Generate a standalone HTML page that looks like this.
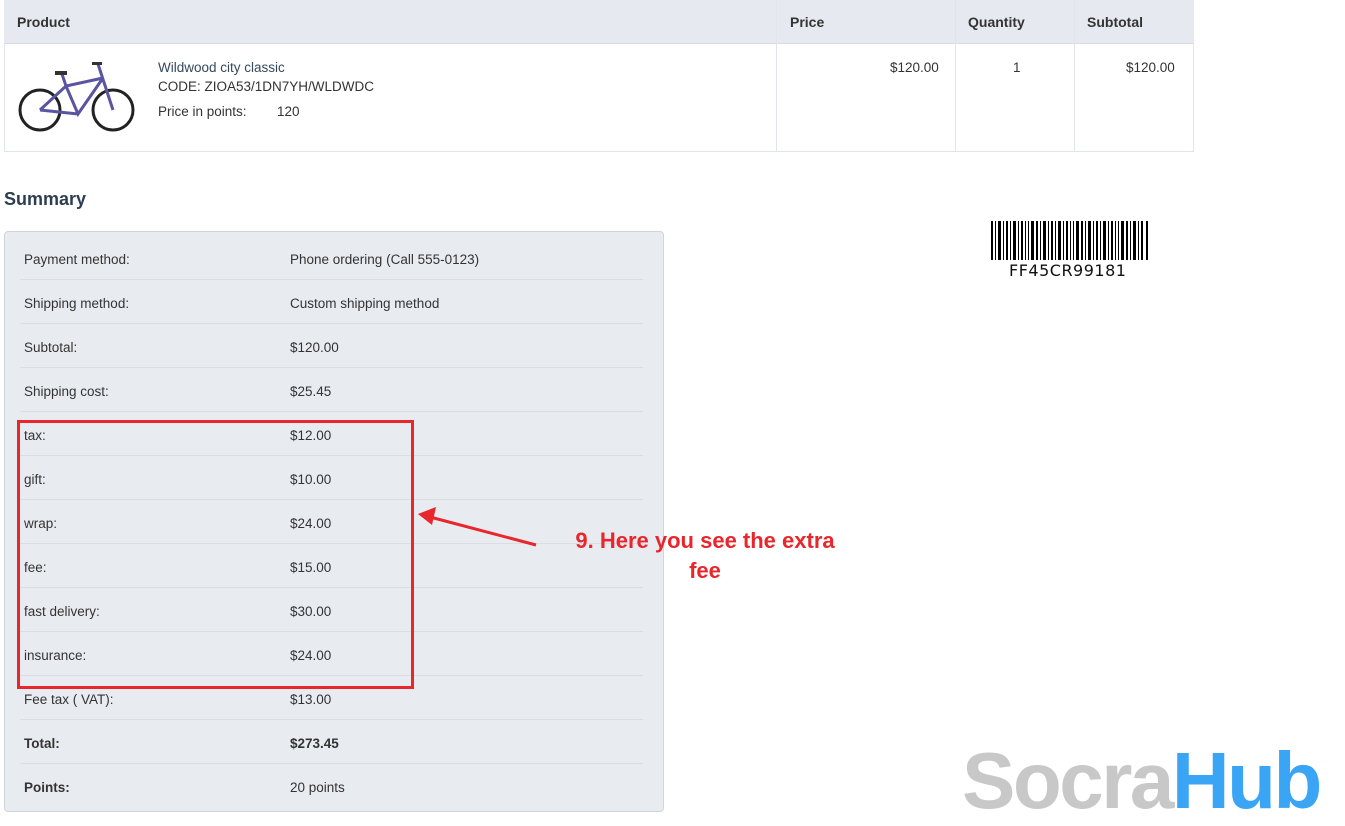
<!DOCTYPE html>
<html><head><meta charset="utf-8"><style>
*{margin:0;padding:0;box-sizing:border-box}
body{width:1345px;height:822px;background:#fff;font-family:"Liberation Sans",sans-serif;color:#333;position:relative;overflow:hidden;font-size:13.5px}
.abs{position:absolute}
.th{top:0;height:44px;background:#e6eaf0;border-bottom:1px solid #d8dde3;font-weight:bold;font-size:14px;color:#333;line-height:43px}
.row{position:absolute;left:20px;width:623px;height:44px;line-height:47px;border-bottom:1px solid #d9dee4}
.row span{position:absolute;left:4px}
.row b,.row em{position:absolute;left:270px;font-style:normal}
</style></head><body>
<div class="abs" style="left:4px;top:0;width:1190px;height:152px;border:1px solid #e1e4e8;border-top:none"></div>
<div class="abs th" style="left:4px;width:1190px"></div>
<div class="abs" style="left:776px;top:0;width:1px;height:152px;background:#e1e4e8"></div>
<div class="abs" style="left:955px;top:0;width:1px;height:152px;background:#e1e4e8"></div>
<div class="abs" style="left:1074px;top:0;width:1px;height:152px;background:#e1e4e8"></div>
<div class="abs" style="left:17px;top:14px;font-weight:bold;font-size:14px">Product</div>
<div class="abs" style="left:790px;top:14px;font-weight:bold;font-size:14px">Price</div>
<div class="abs" style="left:968px;top:14px;font-weight:bold;font-size:14px">Quantity</div>
<div class="abs" style="left:1087px;top:14px;font-weight:bold;font-size:14px">Subtotal</div>
<svg class="abs" style="left:18px;top:56px" width="120" height="80" viewBox="0 0 120 80">
<g fill="none" stroke="#222" stroke-width="3"><circle cx="22" cy="54" r="20"/><circle cx="95" cy="54" r="20"/></g>
<g fill="none" stroke="#5a55a0" stroke-width="3"><path d="M22 54 L48 30 L85 22 M48 30 L60 58 L85 22 M95 54 L80 8 M22 54 L60 58 M44 18 L48 30"/></g>
<path d="M37 15 h12 v4 h-12z M74 6 h10 v3 h-10z" fill="#333"/>
</svg>
<div class="abs" style="left:158px;top:60px;color:#34495e">Wildwood city classic</div>
<div class="abs" style="left:158px;top:79px">CODE: ZIOA53/1DN7YH/WLDWDC</div>
<div class="abs" style="left:158px;top:104px">Price in points:</div>
<div class="abs" style="left:277px;top:104px">120</div>
<div class="abs" style="left:890px;top:60px">$120.00</div>
<div class="abs" style="left:1013px;top:60px">1</div>
<div class="abs" style="left:1126px;top:60px">$120.00</div>
<div class="abs" style="left:4px;top:189px;font-size:18px;font-weight:bold;color:#2c3e50">Summary</div>
<div class="abs" style="left:4px;top:231px;width:660px;height:581px;background:#e8ecf1;border:1px solid #cfd5dc;border-radius:4px"></div>
<div class="row" style="top:236px"><span>Payment method:</span><em>Phone ordering (Call 555-0123)</em></div>
<div class="row" style="top:280px"><span>Shipping method:</span><em>Custom shipping method</em></div>
<div class="row" style="top:324px"><span>Subtotal:</span><em>$120.00</em></div>
<div class="row" style="top:368px"><span>Shipping cost:</span><em>$25.45</em></div>
<div class="row" style="top:412px"><span>tax:</span><em>$12.00</em></div>
<div class="row" style="top:456px"><span>gift:</span><em>$10.00</em></div>
<div class="row" style="top:500px"><span>wrap:</span><em>$24.00</em></div>
<div class="row" style="top:544px"><span>fee:</span><em>$15.00</em></div>
<div class="row" style="top:588px"><span>fast delivery:</span><em>$30.00</em></div>
<div class="row" style="top:632px"><span>insurance:</span><em>$24.00</em></div>
<div class="row" style="top:676px"><span>Fee tax ( VAT):</span><em>$13.00</em></div>
<div class="row" style="top:720px;font-weight:bold"><span>Total:</span><b>$273.45</b></div>
<div class="row" style="top:764px;border:none"><span style="font-weight:bold">Points:</span><em>20 points</em></div>
<div class="abs" style="left:17px;top:420px;width:397px;height:269px;border:3px solid #e8262b"></div>
<svg class="abs" style="left:0;top:0" width="1345" height="822"><line x1="536" y1="545" x2="430" y2="517" stroke="#e8262b" stroke-width="3"/><path d="M418 514 L436 507 L432 525 Z" fill="#e8262b"/></svg>
<div class="abs" style="left:530px;top:526px;width:350px;text-align:center;color:#e8262b;font-weight:bold;font-size:22px;line-height:30px">9. Here you see the extra<br>fee</div>
<svg class="abs" style="left:991px;top:221px" width="157" height="39">
<g fill="#000">
<rect x="0" width="2" height="39"/><rect x="4" width="1" height="39"/><rect x="7" width="3" height="39"/><rect x="12" width="1" height="39"/><rect x="15" width="2" height="39"/><rect x="19" width="1" height="39"/><rect x="22" width="3" height="39"/><rect x="27" width="1" height="39"/><rect x="30" width="2" height="39"/><rect x="34" width="1" height="39"/><rect x="37" width="1" height="39"/><rect x="40" width="3" height="39"/><rect x="45" width="2" height="39"/><rect x="49" width="1" height="39"/><rect x="52" width="3" height="39"/><rect x="57" width="1" height="39"/><rect x="60" width="2" height="39"/><rect x="64" width="1" height="39"/><rect x="67" width="3" height="39"/><rect x="72" width="1" height="39"/><rect x="75" width="2" height="39"/><rect x="79" width="1" height="39"/><rect x="82" width="1" height="39"/><rect x="85" width="3" height="39"/><rect x="90" width="2" height="39"/><rect x="94" width="1" height="39"/><rect x="97" width="3" height="39"/><rect x="102" width="1" height="39"/><rect x="105" width="2" height="39"/><rect x="109" width="1" height="39"/><rect x="112" width="3" height="39"/><rect x="117" width="1" height="39"/><rect x="120" width="2" height="39"/><rect x="124" width="1" height="39"/><rect x="127" width="1" height="39"/><rect x="130" width="3" height="39"/><rect x="135" width="2" height="39"/><rect x="139" width="1" height="39"/><rect x="142" width="3" height="39"/><rect x="147" width="1" height="39"/><rect x="150" width="2" height="39"/><rect x="155" width="2" height="39"/>
</g></svg>
<div class="abs" style="left:1009px;top:261px;font-family:'DejaVu Sans',sans-serif;font-size:16px;color:#111;letter-spacing:0.5px">FF45CR99181</div>
<div class="abs" style="left:962px;top:736px;font-size:80px;font-weight:bold;line-height:90px;letter-spacing:-2.5px"><span style="color:#c8c8c8">Socra</span><span style="color:#3aa5f5">Hub</span></div>
</body></html>
